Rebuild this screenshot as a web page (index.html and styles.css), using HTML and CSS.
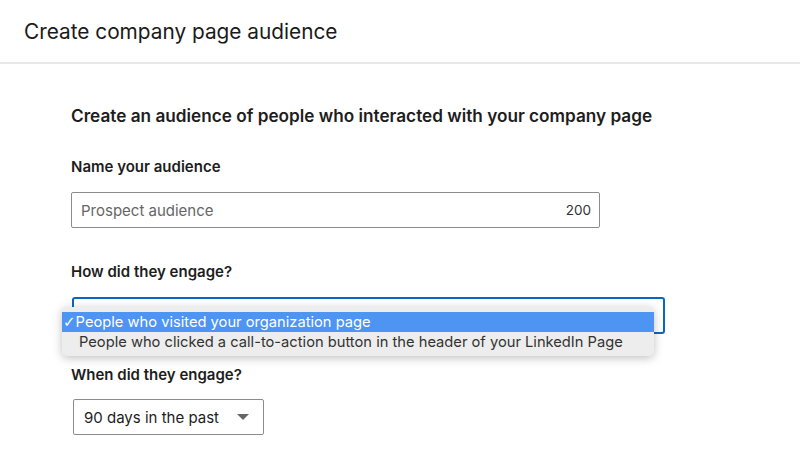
FILE: index.html
```html
<!DOCTYPE html>
<html lang="en">
<head>
    <meta charset="UTF-8">
    <meta name="viewport" content="width=device-width, initial-scale=1.0">
    <title>Create company page audience</title>
    <link rel="stylesheet" href="styles.css">
</head>
<body>
    <div class="header">
        <h1 class="title">Create company page audience</h1>
    </div>
    <div class="content">
        <h2 class="lead">Create an audience of people who interacted with your company page</h2>

        <label class="label">Name your audience</label>
        <div class="field name-field">
            <span class="value">Prospect audience</span>
            <span class="count">200</span>
        </div>

        <label class="label">How did they engage?</label>
        <div class="engage">
            <div class="field engage-field"></div>
            <ul class="menu">
                <li class="option selected"><span class="tick">✓</span>People who visited your organization page</li>
                <li class="option">People who clicked a call-to-action button in the header of your LinkedIn Page</li>
            </ul>
        </div>

        <label class="label">When did they engage?</label>
        <div class="field time-field">
            <span class="value dark">90 days in the past</span>
            <svg class="caret" width="12" height="6" viewBox="0 0 12 6"><path d="M0 0h12L6 6z" fill="#666"/></svg>
        </div>
    </div>
</body>
</html>
```

FILE: styles.css
```css
html,body,div,span,h1,h2,ul,li,label{margin:0; padding:0;}
body{background:#fff; color:#1d1d1d; font-family:Inter, "Liberation Sans", Arial, sans-serif;}

.header{height:62px; padding-left:24px; display:flex; align-items:center; border-bottom:2px solid #e8e8e8;}
.title{font-size:20.8px; font-weight:normal; color:#1a1a1a;}

.content{padding:40px 0 0 71px;}
.lead{font-size:17.2px; font-weight:600; line-height:24px; margin-bottom:28px;}
.label{display:block; font-size:15px; font-weight:600; line-height:22px;}

.field{box-sizing:border-box; border:1px solid #8c8c8c; border-radius:2px; display:flex; align-items:center;}
.name-field{width:529px; height:36px; margin:14px 0 33px; padding:0 8px 0 9px; justify-content:space-between;}
.value{font-size:15px; color:#666;}
.value.dark{color:#1d1d1d;}
.count{font-size:13.5px; color:#333;}

/* select open with the native menu over it */
.engage{position:relative; margin:14px 0 30px;}
.engage-field{width:593px; height:37px; margin-left:1px; border:2px solid #0a66c2; border-radius:3px;}
.menu{position:absolute; left:-9px; top:10px; width:592px; list-style:none; padding:5px 0 4px; background:#ededed; border-radius:5px; box-shadow:0 2px 10px rgba(0,0,0,.25);}
.option{height:20px; line-height:20px; font-size:14.7px; color:#333; padding-left:17px;}
.option.selected{background:#4e94f3; color:#fff; padding-left:1px;}
.tick{font-family:"DejaVu Sans", sans-serif; font-size:15px;}

.time-field{width:191px; height:36px; margin:13px 0 0 2px; padding:0 14px 0 10px; justify-content:space-between;}
.caret{display:block;}
```
